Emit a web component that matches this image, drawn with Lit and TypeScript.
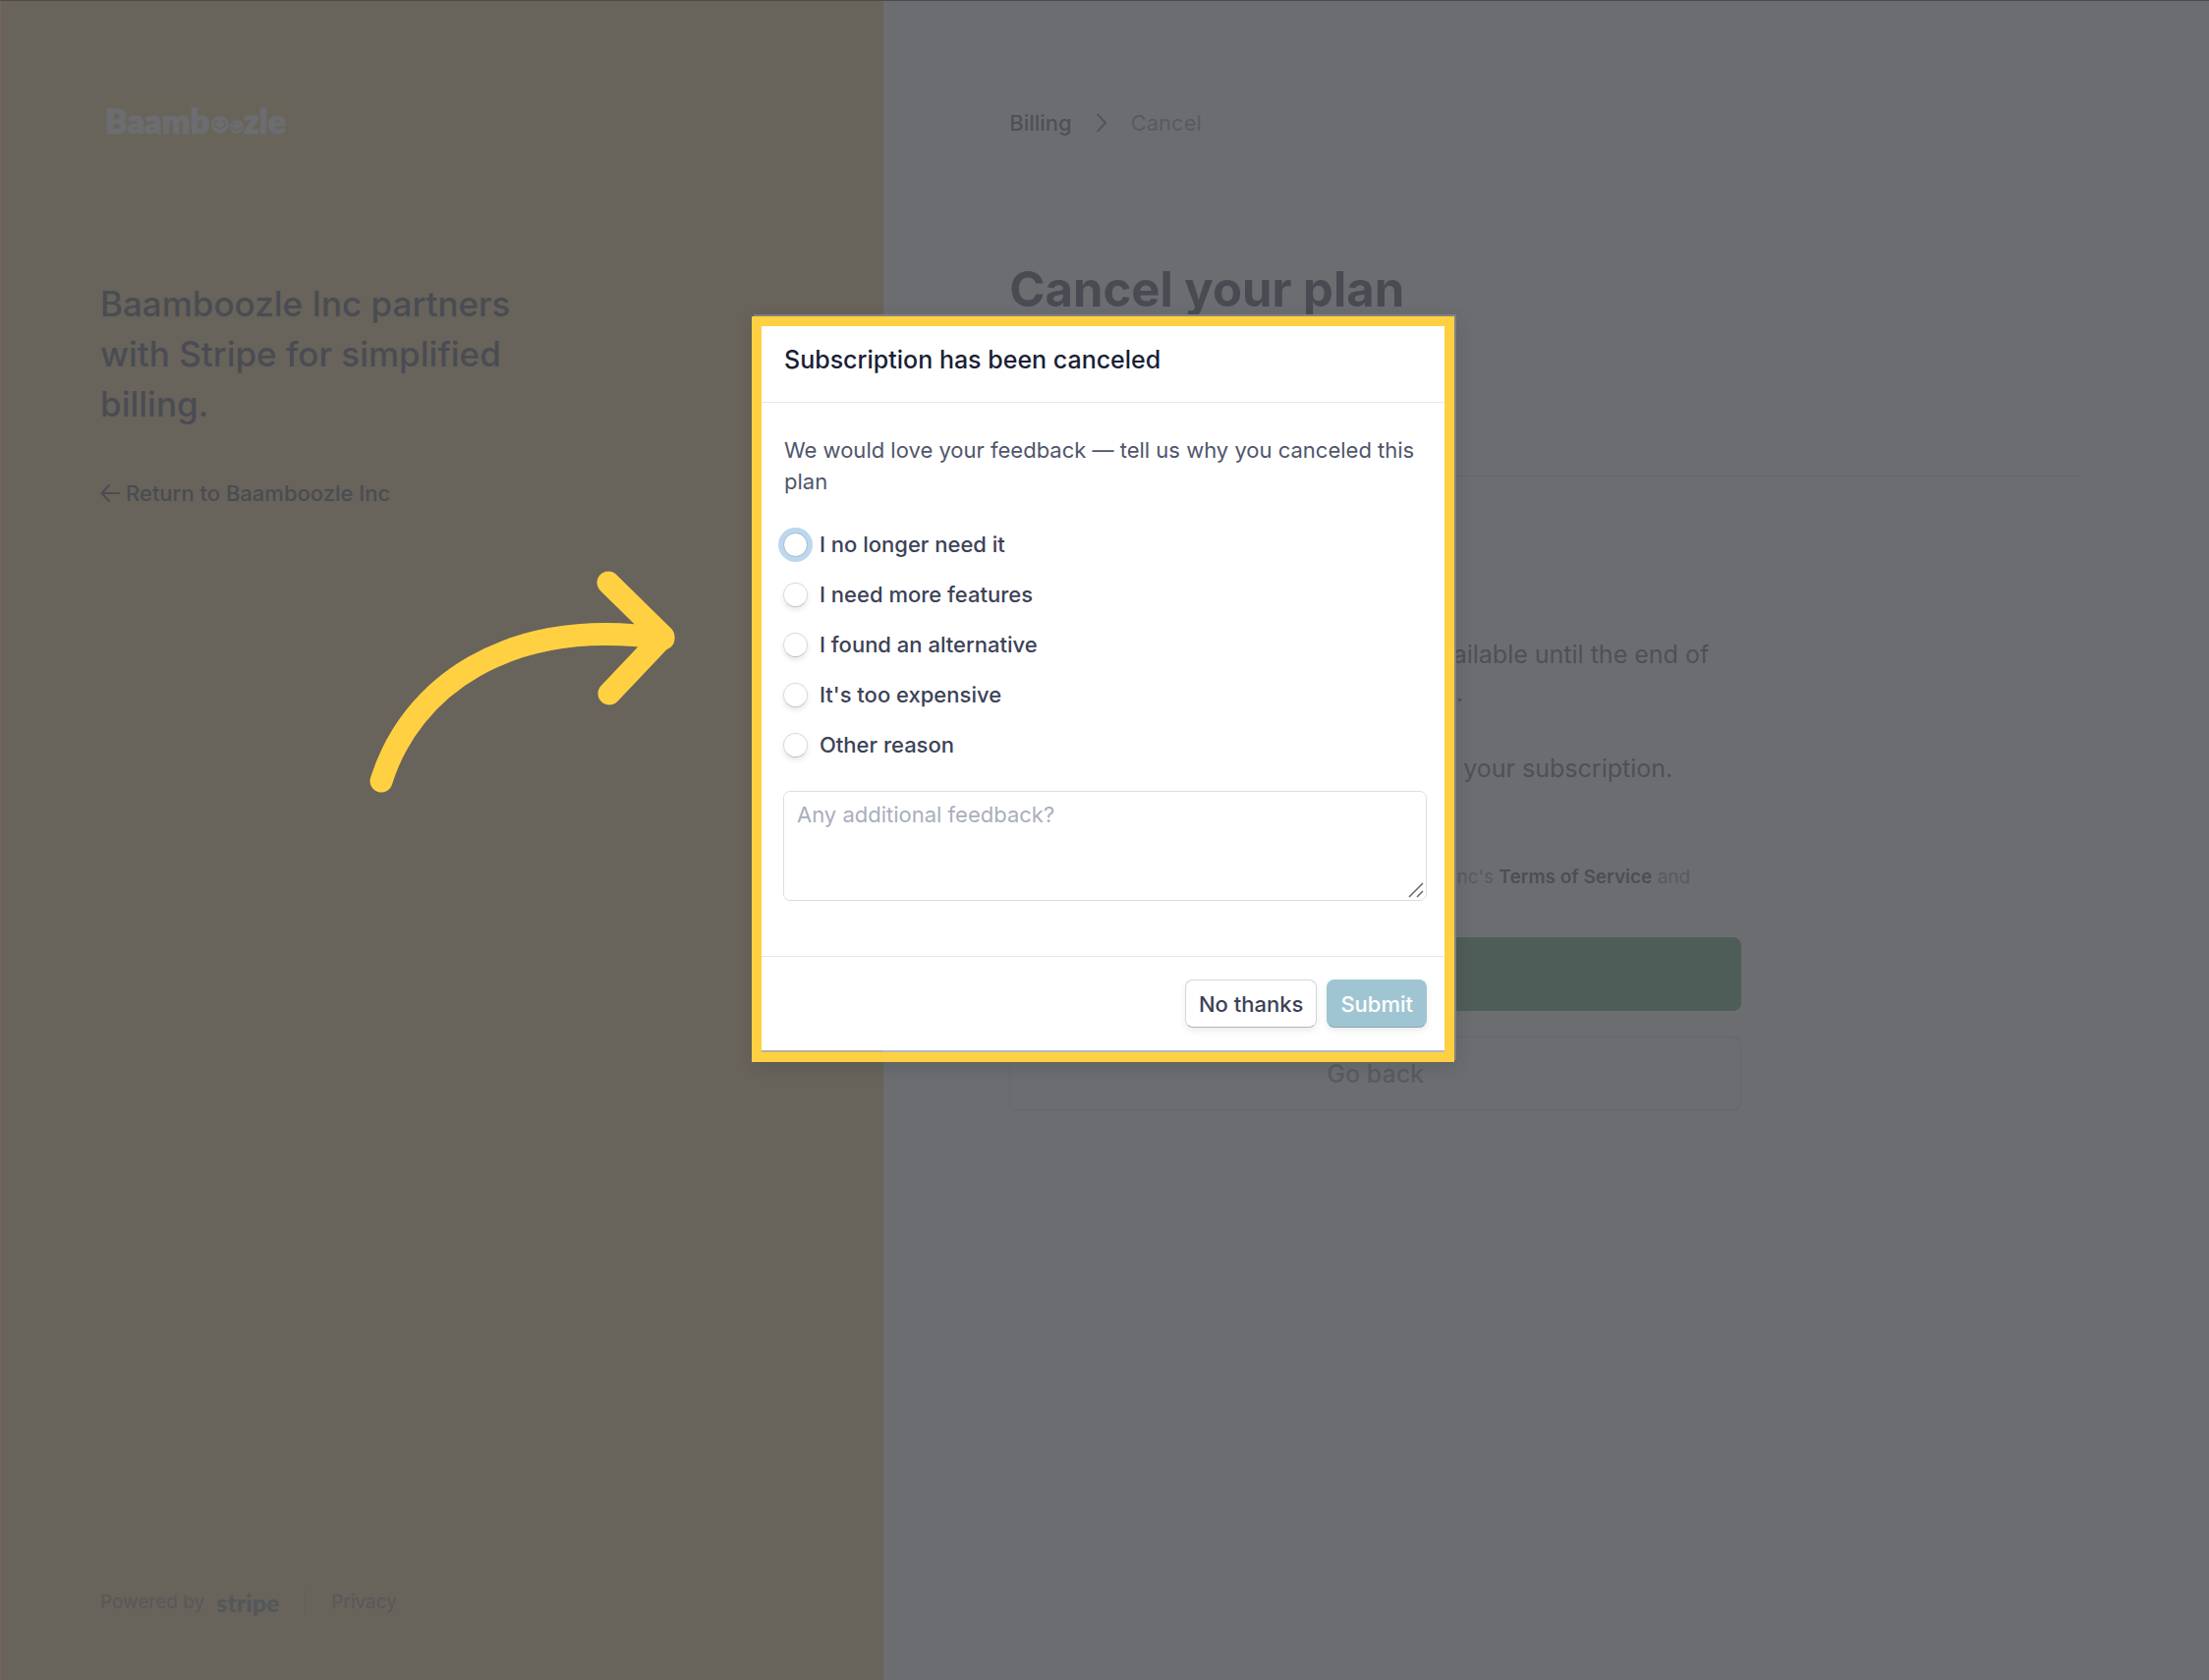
import { LitElement, html, css, svg } from "lit";
import { customElement, state } from "lit/decorators.js";

const reasons = [
  { id: "unused", label: "I no longer need it" },
  { id: "features", label: "I need more features" },
  { id: "alternative", label: "I found an alternative" },
  { id: "expensive", label: "It's too expensive" },
  { id: "other", label: "Other reason" },
];

const backIcon = svg`<path d="M19 10H1.5M9 2L1.5 10L9 18" />`;

@customElement("brand-panel")
class BrandPanel extends LitElement {
  static styles = css`
    :host {
      display: flex;
      flex-direction: column;
      box-sizing: border-box;
      padding: 99px 101px 64px;
      background: #68635b;
      border-left: 1px solid #7a655b;
      color: #4a4c53;
    }
    .logo {
      align-self: flex-start;
      width: 192px;
      height: 50px;
      background: #69645a;
    }
    .logo text {
      font: 800 34px Lato, sans-serif;
      fill: #6c6d71;
      stroke: #6c6d71;
      stroke-width: 1;
    }
    .face { fill: #6c6d71; }
    .smile { fill: none; stroke: #69645a; stroke-width: 1.5; stroke-linecap: round; }
    h2 {
      max-width: 450px;
      margin: 134px 0 0;
      font-size: 35px;
      font-weight: 500;
      line-height: 51px;
    }
    .back {
      display: flex;
      align-items: center;
      gap: 6px;
      margin-top: 49px;
      color: inherit;
      font-size: 22px;
      font-weight: 500;
      line-height: 32px;
      text-decoration: none;
    }
    .back svg {
      width: 20px;
      height: 20px;
      fill: none;
      stroke: currentColor;
      stroke-width: 2;
      stroke-linecap: round;
      stroke-linejoin: round;
    }
    footer {
      display: flex;
      align-items: center;
      margin-top: auto;
      font-size: 19px;
      line-height: 30px;
      color: #58585a;
    }
    .stripe {
      margin-left: 12px;
      font: 900 25px/30px Lato, sans-serif;
      color: #54575b;
    }
    .bar {
      width: 1px;
      height: 30px;
      margin: 0 26px;
      background: #646059;
    }
    footer a { color: inherit; text-decoration: none; }
  `;
  render() {
    return html`
      <svg class="logo" viewBox="0 0 192 50" role="img" aria-label="Baamboozle">
        <text x="5" y="36">Baamb</text>
        <circle class="face" cx="122" cy="27" r="9" />
        <path class="smile" d="M116 27Q122 34 128 27M117 24L120 23M124 23L127 24" />
        <circle class="face" cx="139" cy="29" r="7" />
        <path class="smile" d="M134 30Q139 35 144 29M136 26L137 25M141 25L142 25" />
        <text x="146" y="36">zle</text>
      </svg>
      <h2>Baamboozle Inc partners with Stripe for simplified billing.</h2>
      <a class="back" href="#"><svg viewBox="0 0 20 20" aria-hidden="true">${backIcon}</svg>Return to Baamboozle Inc</a>
      <footer>
        <span>Powered by</span><span class="stripe">stripe</span>
        <span class="bar"></span><a href="#privacy">Privacy</a>
      </footer>
    `;
  }
}

@customElement("cancel-plan")
class CancelPlan extends LitElement {
  static styles = css`
    :host {
      display: block;
      box-sizing: border-box;
      padding: 107px 128px 0;
      background: #6c6d71;
      color: #4f5056;
    }
    nav {
      display: flex;
      align-items: center;
      gap: 23px;
      font-size: 22px;
      line-height: 34px;
      color: #5a5b60;
    }
    nav a { color: #4f5056; font-weight: 500; text-decoration: none; }
    nav svg {
      width: 14px;
      height: 20px;
      fill: none;
      stroke: #54555b;
      stroke-width: 2;
      stroke-linecap: round;
      stroke-linejoin: round;
    }
    h1 {
      margin: 120px 0 0;
      font-size: 49px;
      font-weight: 700;
      line-height: 66px;
      color: #494b52;
    }
    hr {
      margin: 156px 0 0;
      border: 0;
      border-top: 1px solid #66676c;
    }
    .body { max-width: 745px; padding-top: 162px; }
    p { margin: 0 0 38px; font-size: 25px; line-height: 39px; text-align: right; }
    .first { padding-right: 33px; }
    .first p { margin: 0; }
    .tail { padding-right: 283px; margin-bottom: 38px; }
    .renew { padding-right: 70px; }
    .terms { margin: 76px 52px 0 0; font-size: 19px; line-height: 30px; color: #595a60; }
    .terms a { color: #4d4e54; font-weight: 600; text-decoration: none; }
    .actions { display: grid; gap: 26px; margin-top: 46px; }
    button {
      height: 75px;
      border: 1px solid #66676b;
      border-radius: 8px;
      background: #6c6d71;
      font: 500 25px Inter, sans-serif;
      color: #5a5b60;
    }
    .confirm { border-color: #4f5d58; background: #4f5d58; color: #6c6d71; }
  `;
  render() {
    return html`
      <nav aria-label="Breadcrumb">
        <a href="#billing">Billing</a>
        <svg viewBox="0 0 14 20" aria-hidden="true"><path d="M3 1.500L11 10L3 18.500" /></svg>
        <span>Cancel</span>
      </nav>
      <h1>Cancel your plan</h1>
      <hr />
      <div class="body">
        <div class="first"><p>available until the end of</p></div>
        <p class="tail">.</p>
        <p class="renew">renew your subscription.</p>
        <p class="terms">Baamboozle Inc's <a href="#terms">Terms of Service</a> and</p>
        <div class="actions">
          <button class="confirm" aria-label="Cancel plan"></button>
          <button>Go back</button>
        </div>
      </div>
    `;
  }
}

@customElement("feedback-dialog")
class FeedbackDialog extends LitElement {
  @state() private reason = "";

  static styles = css`
    :host {
      display: block;
      box-sizing: border-box;
      width: 715px;
      border: 10px solid #ffd142;
      background: #fff;
      color: #414552;
      box-shadow: 2px -2px 0 #808185, 2px 4px 16px rgba(40, 40, 46, 0.16);
    }
    form {
      border-bottom: 2px solid #b4bac3;
      border-image: linear-gradient(90deg, #b9b09a 124px, #b4bac3 124px) 2;
    }
    header {
      padding: 18px 23px 26px;
      border-bottom: 1px solid #e3e6ec;
    }
    h2 {
      margin: 0;
      font-size: 25px;
      font-weight: 500;
      line-height: 33px;
      color: #1a1f36;
    }
    .content { padding: 32px 18px 56px 22px; }
    .intro {
      margin: 0 0 32px 1px;
      font-size: 22px;
      line-height: 32px;
      color: #4f566b;
    }
    fieldset { display: grid; gap: 19px; margin: 0; padding: 0; border: 0; }
    label {
      display: flex;
      align-items: center;
      gap: 12px;
      font-size: 22px;
      font-weight: 500;
      line-height: 32px;
      color: #3c4257;
    }
    input {
      appearance: none;
      width: 25px;
      height: 25px;
      margin: 0;
      border: 1px solid #d9dade;
      border-bottom-color: #bcbdc2;
      border-radius: 50%;
      background: #fff;
      box-shadow: 0 3px 5px rgba(60, 66, 87, 0.12);
    }
    input:checked { border: 7px solid #5f9eb3; }
    .current {
      border-color: #a3b7ca;
      box-shadow: 0 0 0 5px #bcd7ee;
    }
    textarea {
      display: block;
      box-sizing: border-box;
      width: 100%;
      height: 112px;
      margin-top: 31px;
      padding: 7px 13px;
      border: 1px solid #dcdee3;
      border-radius: 7px;
      background: #fff;
      font: 400 22px/32px Inter, sans-serif;
      color: #3c4257;
      resize: none;
    }
    textarea::placeholder { color: #a9aebc; opacity: 1; }
    .box { position: relative; }
    .grip {
      position: absolute;
      right: 3px;
      bottom: 3px;
      width: 16px;
      height: 16px;
      stroke: #666;
      stroke-width: 1.5;
    }
    .buttons {
      display: flex;
      justify-content: flex-end;
      gap: 10px;
      padding: 23px 18px;
      border-top: 1px solid #e3e6ec;
    }
    button {
      height: 49px;
      padding: 0 13px;
      border: 1px solid #d5d6dc;
      border-bottom-color: #b3b5bf;
      border-radius: 8px;
      background: #fff;
      font: 500 22px Inter, sans-serif;
      color: #3c4257;
      box-shadow: 0 3px 6px rgba(60, 66, 87, 0.1);
    }
    .submit {
      border-color: #a0c5d2 #a0c5d2 #86a5b1;
      background: #a0c5d2;
      color: #fff;
    }
  `;
  render() {
    return html`
      <form role="dialog" aria-labelledby="title" @submit=${(e: Event) => e.preventDefault()}>
        <header><h2 id="title">Subscription has been canceled</h2></header>
        <div class="content">
          <p class="intro" id="intro">We would love your feedback — tell us why you canceled this plan</p>
          <fieldset aria-labelledby="intro">
            ${reasons.map(
              (r, i) => html`<label for=${r.id}>
                <input
                  type="radio"
                  name="reason"
                  id=${r.id}
                  class=${i === 0 ? "current" : ""}
                  .checked=${this.reason === r.id}
                  @change=${() => (this.reason = r.id)}
                />${r.label}</label>`
            )}
          </fieldset>
          <div class="box">
            <textarea aria-label="Any additional feedback?" placeholder="Any additional feedback?"></textarea>
            <svg class="grip" viewBox="0 0 16 16" aria-hidden="true"><path d="M1 15L15 1M9 15L15 9" /></svg>
          </div>
        </div>
        <div class="buttons">
          <button type="button">No thanks</button>
          <button class="submit" type="submit">Submit</button>
        </div>
      </form>
    `;
  }
}

@customElement("app-root")
class AppRoot extends LitElement {
  static styles = css`
    :host {
      display: block;
      position: relative;
      font-family: Inter, sans-serif;
    }
    .page {
      display: grid;
      grid-template-columns: 2fr 3fr;
      box-sizing: border-box;
      min-height: 100vh;
      border-top: 1px solid #4d4b4b;
    }
    .overlay {
      position: absolute;
      inset: 0;
      display: flex;
      justify-content: center;
      align-items: flex-start;
      padding: 322px 3px 0 0;
    }
    .arrow {
      position: absolute;
      left: 376px;
      top: 581px;
      width: 312px;
      height: 226px;
      fill: none;
      stroke: #ffd142;
      stroke-width: 23;
      stroke-linecap: round;
      stroke-linejoin: round;
    }
  `;
  render() {
    return html`
      <div class="page">
        <brand-panel></brand-panel>
        <cancel-plan></cancel-plan>
      </div>
      <div class="overlay"><feedback-dialog></feedback-dialog></div>
      <svg class="arrow" viewBox="376 581 312 226" aria-hidden="true">
        <path d="M388 795C418 700 515 627 675 650" />
        <path d="M619 593L675 648L620 706" />
      </svg>
    `;
  }
}
